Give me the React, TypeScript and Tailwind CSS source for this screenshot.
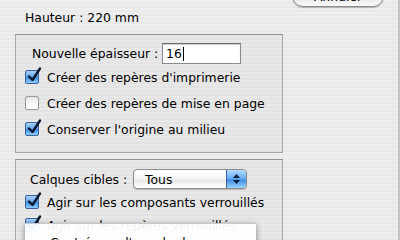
import React from "react";

function CheckBox({ checked }: { checked: boolean }) {
  if (checked) {
    return (
      <div className="relative w-[14px] h-[14px] shrink-0 rounded-[2px] border border-[#3a5f9a] bg-[linear-gradient(180deg,#a9d2fb_0%,#5ea6ef_50%,#3f8fe3_55%,#8fd0ff_100%)]">
        <svg className="absolute left-[1px] top-[-4px]" width="15" height="16" viewBox="0 0 15 16">
          <path d="M2 9.5 L5.5 13 L13 1.5" fill="none" stroke="#0c1830" strokeWidth="2.4" strokeLinecap="round" strokeLinejoin="round" />
        </svg>
      </div>
    );
  }
  return (
    <div className="w-[14px] h-[14px] shrink-0 rounded-[2px] border border-[#9a9a9a] bg-[linear-gradient(180deg,#e6e6e6_0%,#f8f8f8_50%,#ffffff_100%)]" />
  );
}

function CheckRow({ checked, label, h = "h-[26px]" }: { checked: boolean; label: string; h?: string }) {
  return (
    <div className={`flex items-center ${h} pl-[9px] gap-[8px]`}>
      <CheckBox checked={checked} />
      <span className="whitespace-nowrap">{label}</span>
    </div>
  );
}

export default function App() {
  return (
    <div
      className="relative w-[400px] h-[240px] overflow-hidden text-black text-[12.4px] leading-[15px] bg-[repeating-linear-gradient(180deg,#eeeeee_0px,#eeeeee_2px,#e9e9e9_2px,#e9e9e9_4px)] border-r-2 border-[#c4c4c4]"
      style={{ fontFamily: '"DejaVu Sans", "Liberation Sans", sans-serif' }}
    >
      {/* Annuler button (cut at top) */}
      <div className="flex">
        <div className="ml-[292px] -mt-[15px] w-[92px] h-[22px] rounded-full border border-[#8c8c8c] bg-[linear-gradient(180deg,#ffffff_0%,#f3f3f3_50%,#e4e4e4_55%,#fafafa_100%)] shadow-[0_1px_1px_rgba(0,0,0,0.25)] flex items-center justify-center">
          <span>Annuler</span>
        </div>
      </div>

      {/* Hauteur */}
      <div className="pl-[25px] mt-[3px] h-[15px] flex items-center">
        <span>Hauteur : 220 mm</span>
      </div>

      {/* Group box 1 */}
      <div className="ml-[15px] mt-[9px] w-[268px] h-[119px] border border-[#a6a6a6] border-t-[#8f8f8f] bg-black/[0.025] flex flex-col">
        <div className="flex items-center mt-[8px] h-[21px] pl-[16px]">
          <span className="whitespace-nowrap w-[130px]">Nouvelle épaisseur :</span>
          <div className="w-[79px] h-[21px] bg-white border border-[#8a8a8a] border-t-[#6e6e6e] shadow-[inset_0_1px_1px_rgba(0,0,0,0.2)] flex items-center pl-[3px]">
            <span>16</span>
            <span className="ml-[1px] w-px h-[14px] bg-black" />
          </div>
        </div>
        <CheckRow checked label="Créer des repères d'imprimerie" />
        <CheckRow checked={false} label="Créer des repères de mise en page" />
        <CheckRow checked label="Conserver l'origine au milieu" />
      </div>

      {/* Group box 2 */}
      <div className="ml-[15px] mt-[6px] w-[268px] h-[100px] border border-[#a6a6a6] border-t-[#8f8f8f] bg-black/[0.025] flex flex-col">
        <div className="flex items-center mt-[9px] h-[20px] pl-[14px]">
          <span className="whitespace-nowrap w-[103px]">Calques cibles :</span>
          <div className="w-[114px] h-[20px] rounded-[4px] border border-[#8a8a8a] bg-[linear-gradient(180deg,#ffffff_0%,#f4f4f4_50%,#e8e8e8_55%,#ffffff_100%)] flex items-stretch overflow-hidden shadow-[0_1px_1px_rgba(0,0,0,0.2)]">
            <div className="flex-1 flex items-center pl-[11px]">
              <span>Tous</span>
            </div>
            <div className="w-[20px] border-l border-[#3a5f9a] bg-[linear-gradient(180deg,#b4dcff_0%,#5fa8f0_50%,#3d8de2_55%,#9ad6ff_100%)] flex flex-col items-center justify-center gap-[2px]">
              <svg width="7" height="4" viewBox="0 0 7 4"><path d="M3.5 0 L7 4 L0 4 Z" fill="#0e1d36" /></svg>
              <svg width="7" height="4" viewBox="0 0 7 4"><path d="M0 0 L7 0 L3.5 4 Z" fill="#0e1d36" /></svg>
            </div>
          </div>
        </div>
        <CheckRow checked label="Agir sur les composants verrouillés" h="h-[24px] mt-[1px]" />
        <CheckRow checked label="Agir sur les repères verrouillés" h="h-[22px]" />
      </div>

      {/* Popup menu overlay */}
      <div className="absolute left-[25px] top-[223px] w-[231px] h-[30px] bg-white/95 shadow-[0_2px_6px_rgba(0,0,0,0.45)] border-t border-[#c8c8c8] pl-[25px] pt-[11px]">
        <span className="whitespace-nowrap">Centrés sur l'axe du dos</span>
      </div>
    </div>
  );
}
